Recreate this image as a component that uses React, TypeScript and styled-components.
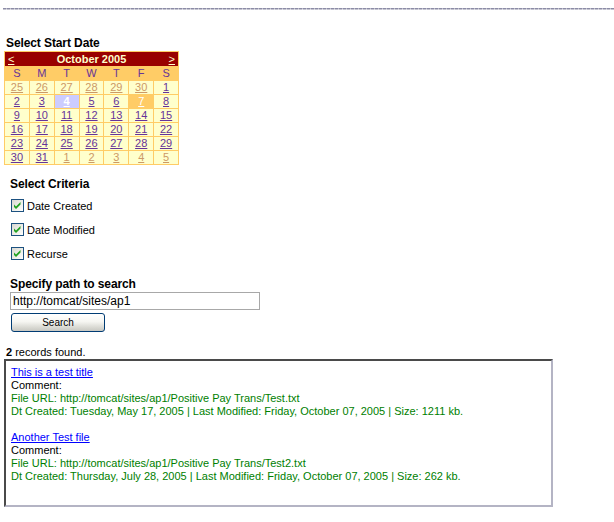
import React from 'react';
import styled, { createGlobalStyle } from 'styled-components';

const GlobalStyle = createGlobalStyle`
  html, body { margin: 0; padding: 0; background: #ffffff; }
  body {
    font-family: "Liberation Sans", Arial, sans-serif;
    font-size: 11px;
    line-height: 13px;
    color: #000000;
  }
`;

const Page = styled.div`
  padding: 8px 0 0 3px;
  display: flex;
  flex-direction: column;
  align-items: flex-start;
`;

const Rule = styled.div`
  align-self: stretch;
  height: 2px;
  background:
    repeating-linear-gradient(90deg, #8c8ca6 0 3px, #bcbccb 3px 4px) top / 100% 1px no-repeat,
    repeating-linear-gradient(90deg, #c4c4d0 0 3px, #e2e2ea 3px 4px) bottom / 100% 1px no-repeat;
`;

const Heading = styled.div<{ $top: number; $left: number }>`
  margin-top: ${(p) => p.$top}px;
  margin-left: ${(p) => p.$left}px;
  font-size: 12px;
  font-weight: bold;
  line-height: 13px;
  letter-spacing: -0.1px;
`;

const Calendar = styled.div`
  margin: 1px 0 0 1px;
  width: 175px;
  box-sizing: border-box;
  padding: 1px;
  background: #ffcc66;
  display: grid;
  grid-template-columns: repeat(7, 1fr);
  grid-template-rows: 14px;
  grid-auto-rows: 13px;
  gap: 1px;
  color: #663399;
  font-size: 11px;
  line-height: 13px;
`;

const TitleBar = styled.div`
  grid-column: 1 / -1;
  background: #990000;
  color: #ffffcc;
  display: flex;
  align-items: center;
  justify-content: space-between;
  padding: 0 3px 0 3px;
  font-weight: bold;
  line-height: 14px;
`;

const NavLink = styled.a`
  color: #ffffcc;
  font-weight: normal;
  text-decoration: underline;
  cursor: pointer;
`;

const DayName = styled.div`
  text-align: center;
  color: #663399;
`;

type CellKind = 'normal' | 'other' | 'selected' | 'today';

const DayCell = styled.div<{ $kind: CellKind }>`
  text-align: center;
  background: ${(p) =>
    p.$kind === 'selected' ? '#ccccff' : p.$kind === 'today' ? '#ffcc66' : '#ffffcc'};
  font-weight: ${(p) => (p.$kind === 'selected' ? 'bold' : 'normal')};
`;

const DayLink = styled.a<{ $kind: CellKind }>`
  color: ${(p) =>
    p.$kind === 'other' ? '#cc9966' : p.$kind === 'normal' ? '#663399' : '#ffffff'};
  text-decoration: underline;
  cursor: pointer;
`;

const Criteria = styled.div`
  display: flex;
  flex-direction: column;
  align-items: flex-start;
`;

const CheckList = styled.div`
  margin: 8px 0 0 8px;
  display: flex;
  flex-direction: column;
  gap: 11px;
`;

const CheckRow = styled.label`
  display: flex;
  align-items: flex-start;
  height: 13px;
`;

const CheckBoxBox = styled.span`
  width: 13px;
  height: 13px;
  box-sizing: border-box;
  border: 1px solid #1c5180;
  background: linear-gradient(135deg, #d8d8d2 0%, #ececE6 50%, #ffffff 100%);
  display: flex;
  flex-shrink: 0;
`;

const CheckLabel = styled.span`
  margin: 1px 0 0 3px;
  line-height: 13px;
`;

const PathInput = styled.input`
  margin: 1px 0 0 7px;
  width: 250px;
  height: 18px;
  box-sizing: border-box;
  border: 1px solid #a8a8a8;
  padding: 0 2px;
  font-family: "Liberation Sans", Arial, sans-serif;
  font-size: 12px;
  color: #000;
  outline: none;
`;

const SearchButton = styled.button`
  margin: 3px 0 0 8px;
  width: 94px;
  height: 19px;
  box-sizing: border-box;
  border: 1px solid #003c74;
  border-radius: 3px;
  background: linear-gradient(to bottom, #ffffff 0%, #f6f6f2 45%, #dcdcd6 75%, #c8c8c2 100%);
  font-family: "Liberation Sans", Arial, sans-serif;
  font-size: 10px;
  color: #000;
  padding: 0;
  line-height: 17px;
`;

const Summary = styled.div`
  margin: 14px 0 0 3px;
  line-height: 13px;
`;

const Results = styled.div`
  margin-left: 1px;
  width: 549px;
  height: 148px;
  box-sizing: border-box;
  border-style: solid;
  border-width: 2px;
  border-color: #4a4a4a #b4b4c4 #b4b4c4 #4a4a4a;
  padding: 5px 5px;
  display: flex;
  flex-direction: column;
  gap: 13px;
`;

const Record = styled.div`
  display: flex;
  flex-direction: column;
  line-height: 13px;
`;

const RecordTitle = styled.a`
  color: #0000ff;
  text-decoration: underline;
  align-self: flex-start;
  cursor: pointer;
`;

const InfoLine = styled.div<{ $green?: boolean }>`
  color: ${(p) => (p.$green ? '#008000' : '#000000')};
  white-space: nowrap;
`;

const CheckBox = () => (
  <CheckBoxBox>
    <svg width="11" height="11" viewBox="0 0 11 11">
      <path d="M2 4.5 L4 6.5 L8.5 2 L8.5 4.5 L4 9 L2 7 Z" fill="#21a121" />
    </svg>
  </CheckBoxBox>
);

const weeks: { d: number; k: CellKind }[][] = [
  [25, 26, 27, 28, 29, 30].map((d) => ({ d, k: 'other' as CellKind })).concat([{ d: 1, k: 'normal' }]),
  [2, 3, 4, 5, 6, 7, 8].map((d) => ({
    d,
    k: (d === 4 ? 'selected' : d === 7 ? 'today' : 'normal') as CellKind,
  })),
  [9, 10, 11, 12, 13, 14, 15].map((d) => ({ d, k: 'normal' as CellKind })),
  [16, 17, 18, 19, 20, 21, 22].map((d) => ({ d, k: 'normal' as CellKind })),
  [23, 24, 25, 26, 27, 28, 29].map((d) => ({ d, k: 'normal' as CellKind })),
  [{ d: 30, k: 'normal' as CellKind }, { d: 31, k: 'normal' as CellKind }].concat(
    [1, 2, 3, 4, 5].map((d) => ({ d, k: 'other' as CellKind }))
  ),
];

const records = [
  {
    title: 'This is a test title',
    url: 'http://tomcat/sites/ap1/Positive Pay Trans/Test.txt',
    created: 'Tuesday, May 17, 2005',
    modified: 'Friday, October 07, 2005',
    size: '1211 kb.',
  },
  {
    title: 'Another Test file',
    url: 'http://tomcat/sites/ap1/Positive Pay Trans/Test2.txt',
    created: 'Thursday, July 28, 2005',
    modified: 'Friday, October 07, 2005',
    size: '262 kb.',
  },
];

export default function App() {
  return (
    <>
      <GlobalStyle />
      <Page>
        <Rule />
        <Heading $top={27} $left={3}>Select Start Date</Heading>
        <Calendar>
          <TitleBar>
            <NavLink>&lt;</NavLink>
            <span>October 2005</span>
            <NavLink>&gt;</NavLink>
          </TitleBar>
          {['S', 'M', 'T', 'W', 'T', 'F', 'S'].map((n, i) => (
            <DayName key={i}>{n}</DayName>
          ))}
          {weeks.flat().map((c, i) => (
            <DayCell key={i} $kind={c.k}>
              <DayLink $kind={c.k}>{c.d}</DayLink>
            </DayCell>
          ))}
        </Calendar>
        <Criteria>
          <Heading $top={13} $left={7}>Select Criteria</Heading>
          <CheckList>
            {['Date Created', 'Date Modified', 'Recurse'].map((l) => (
              <CheckRow key={l}>
                <CheckBox />
                <CheckLabel>{l}</CheckLabel>
              </CheckRow>
            ))}
          </CheckList>
          <Heading $top={18} $left={7}>Specify path to search</Heading>
          <PathInput defaultValue="http://tomcat/sites/ap1" />
          <SearchButton>Search</SearchButton>
        </Criteria>
        <Summary>
          <b>2</b> records found.
        </Summary>
        <Results>
          {records.map((r) => (
            <Record key={r.title}>
              <RecordTitle>{r.title}</RecordTitle>
              <InfoLine>Comment:</InfoLine>
              <InfoLine $green>File URL: {r.url}</InfoLine>
              <InfoLine $green>
                Dt Created: {r.created} | Last Modified: {r.modified} | Size: {r.size}
              </InfoLine>
            </Record>
          ))}
        </Results>
      </Page>
    </>
  );
}
